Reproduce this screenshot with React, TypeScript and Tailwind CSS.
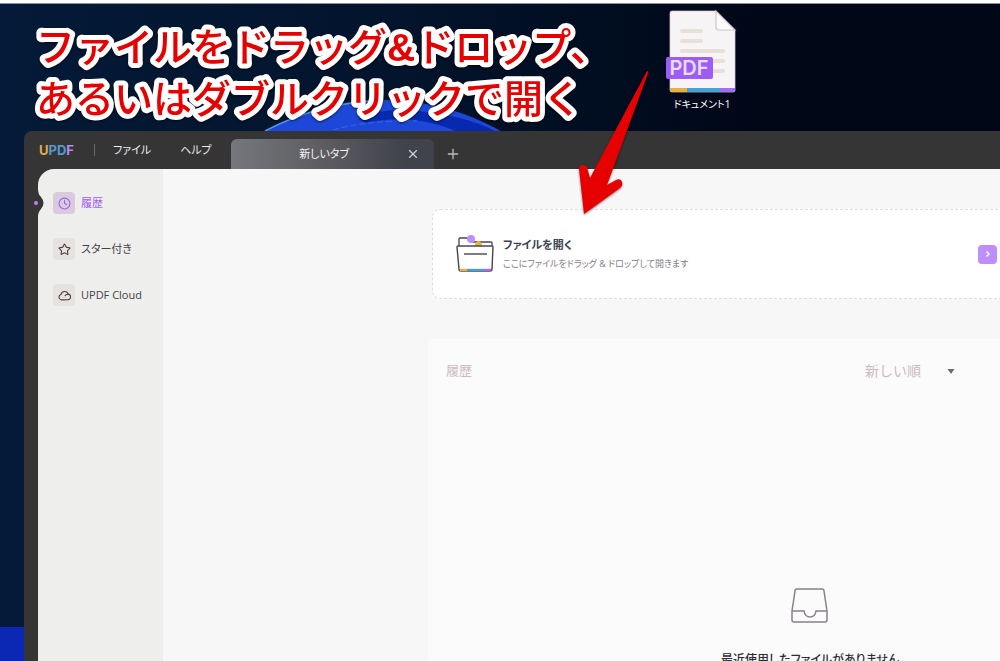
import { Clock, Plus, Star, X } from "lucide-react";
import { useState } from "react";

function CloudIcon({ className }: { className?: string }) {
  return (
    <svg
      className={className}
      viewBox="0 0 24 24"
      fill="none"
      stroke="currentColor"
      strokeWidth="2"
      strokeLinecap="round"
      strokeLinejoin="round"
      aria-hidden="true"
    >
      <path d="M6 20 A5 5 0 0 1 5.500 10.200 A7 7 0 0 1 19 9.500 A5.300 5.300 0 0 1 18 20 Z" />
      <path d="M19 9.500 Q15 9.500 13 12.500" />
    </svg>
  );
}

const NAV_ITEMS = [
  { id: "history", label: "履歴", icon: Clock },
  { id: "starred", label: "スター付き", icon: Star },
  { id: "cloud", label: "UPDF Cloud", icon: CloudIcon },
];

const MENUS = ["ファイル", "ヘルプ"];

const SORT_OPTIONS = ["新しい順", "古い順", "名前順"];

function Wallpaper() {
  return (
    <div className="absolute inset-0 overflow-hidden bg-linear-to-r from-[#041a38] via-[#03142c] via-40% to-[#000818] to-75%">
      <svg className="absolute left-[143px] top-[99px]" width="480" height="480" viewBox="0 0 480 480" aria-hidden="true">
        <circle cx="240" cy="240" r="239" fill="#1c47d8" />
        <path d="M122 32 Q175 4 240 1" fill="none" stroke="#4c9ae0" strokeWidth="1.5" />
        <path d="M215 20 Q235 10 262 11 Q322 15 356 34 L300 60 Z" fill="#0729b0" />
        <path d="M186 40 Q200 22 258 20 Q300 22 326 40 Z" fill="#1c47d8" />
        <path d="M190 31 Q225 21 274 22" fill="none" stroke="#3568e0" strokeDasharray="6 3" />
      </svg>
      <div className="absolute bottom-0 left-0 h-[34px] w-6 bg-[#0a28b4]" />
    </div>
  );
}

function DocumentIcon() {
  return (
    <svg width="72" height="86" viewBox="0 0 72 86" aria-hidden="true">
      <path d="M6 2 H50 L69 21 V81 Q69 83 67 83 H6 Q4 83 4 81 V4 Q4 2 6 2 Z" fill="#f6f4f4" stroke="#d9cfe0" strokeWidth="0.7" />
      <path d="M50 2 V18 Q50 21 53 21 H69 Z" fill="#fdfcfd" stroke="#cfc3d2" strokeWidth="1.2" />
      <g stroke="#e6dfda" strokeWidth="4" strokeLinecap="round">
        <path d="M16 22 H35 M16 32 H35 M16 42 H57 M30 52 H57 M30 62 H57" />
      </g>
      <path d="M4 79 H21 V83 H6 Q4 83 4 81 Z" fill="#ebb03a" />
      <path d="M21 79 H54 V83 H21 Z" fill="#47a0d8" />
      <path d="M54 79 H69 V81 Q69 83 67 83 H54 Z" fill="#a46cf5" />
      <rect x="0" y="48" width="47" height="22" rx="2" fill="#9e5cf6" />
      <text x="23" y="66" textAnchor="middle" className="font-['Inter'] text-[20px] font-semibold" fill="#e6ddf3">
        PDF
      </text>
    </svg>
  );
}

function FolderIcon() {
  return (
    <svg width="38" height="38" viewBox="0 0 38 38" fill="none" aria-hidden="true">
      <path d="M3 12 V4 Q3 3 4 3 H14 L17 7 H35 Q36 7 36 8 V12" fill="#fff" stroke="#4a444c" strokeWidth="1.3" />
      <circle cx="15" cy="4" r="4" fill="#bd8ffa" />
      <path d="M19 11 Q19 6 23 6 Q26 7 26 11 Z" fill="#ebb03a" />
      <path d="M2 11 H36 Q37 11 37 12 L36 34 Q36 36 34 36 H5 Q3 36 3 34 L1 12 Q1 11 2 11 Z" fill="#fff" stroke="#4a444c" strokeWidth="1.4" />
      <path d="M8 19 H31" stroke="#4a444c" strokeWidth="1.4" />
      <path d="M4 35 H11" stroke="#ebb03a" strokeWidth="2.4" />
      <path d="M11 35 H28" stroke="#47a0d8" strokeWidth="2.4" />
      <path d="M28 35 H35" stroke="#a46cf5" strokeWidth="2.4" />
    </svg>
  );
}

function TrayIcon() {
  return (
    <svg width="38" height="36" viewBox="0 0 38 36" fill="none" stroke="#8b808b" strokeWidth="1.5" aria-hidden="true">
      <path d="M6 1 H31 Q33 1 33 3 L36 23 V32 Q36 34 34 34 H3 Q1 34 1 32 V23 L4 3 Q4 1 6 1 Z" />
      <path d="M1 23 H13 Q14 29 19 29 Q24 29 25 23 H36" />
    </svg>
  );
}

// Big outlined caption on top of the desktop
function Caption() {
  return (
    <svg
      className="absolute left-7 top-0 z-20 overflow-visible drop-shadow-[0_1px_1px_rgba(0,0,0,0.6)]"
      width="580"
      height="127"
    >
      <g
        className="font-['Liberation_Sans','Noto_Sans_CJK_JP',sans-serif] text-[39px] font-medium [font-feature-settings:normal]"
        fill="#e60000"
        stroke="#ffffff"
        strokeWidth="10"
        strokeLinejoin="round"
        paintOrder="stroke"
      >
        <text x="8" y="57">
          ファイルをドラッグ<tspan className="font-bold">&amp;</tspan>ドロップ、
        </text>
        <text x="8" y="109">
          あるいはダブルクリックで開く
        </text>
      </g>
    </svg>
  );
}

function ArrowAnnotation() {
  return (
    <svg
      className="pointer-events-none absolute left-[574px] top-[68px] z-20 drop-shadow-[0_1px_1px_rgba(0,0,0,0.5)]"
      width="80"
      height="150"
      viewBox="0 0 80 150"
      aria-hidden="true"
    >
      <path
        d="M72.500 4 Q74 2 74.500 4 L33 117 L42 112 Q47 110 48 114 Q49 118 46 120 L10 146 L5 101 Q5 97 9 97 Q13 97 13.500 101 L16 110 Z"
        fill="#e60000"
      />
    </svg>
  );
}

function TitleBar() {
  return (
    <header className="flex h-[38px] shrink-0 items-end pl-[15px] text-[11px] leading-4">
      <div className="flex h-full items-center">
        <span className="w-[55px] font-['Inter'] text-[13px] font-bold">
          <span className="text-[#e0ab45]">U</span>
          <span className="text-[#4f9dce]">PD</span>
          <span className="text-[#b78af5]">F</span>
        </span>
        <span className="mr-[18px] h-3 w-px bg-[#6b6b6b]" />
        <nav className="flex gap-[29px]">
          {MENUS.map((menu) => (
            <button key={menu} className="text-[#ececec]">
              {menu}
            </button>
          ))}
        </nav>
      </div>
      <div className="ml-[19px] flex h-[30px] w-[203px] items-center rounded-t-md bg-linear-to-r from-[#76777c] via-[#5a5a5e] via-50% to-[#41434c] to-85%">
        <span className="flex-1 pl-3 text-center text-[#f2f2f2]">新しいタブ</span>
        <button aria-label="閉じる" className="mr-[14px] text-[#d0ced2]">
          <X className="h-3.5 w-3.5" strokeWidth={2} />
        </button>
      </div>
      <button aria-label="新しいタブを追加" className="flex h-[30px] w-[38px] items-center justify-center text-[#bdb8bf]">
        <Plus className="h-4 w-4" strokeWidth={2} />
      </button>
    </header>
  );
}

function Sidebar({ active, onSelect }: { active: string; onSelect: (id: string) => void }) {
  return (
    <nav className="relative w-[125px] shrink-0 rounded-tl-2xl bg-[#eeeeec] pl-[15px] pt-[23px]">
      {/* Active marker cut into the window frame */}
      <svg className="absolute -left-1 top-5" width="10" height="28" viewBox="0 0 10 28" aria-hidden="true">
        <path d="M0 0 H4 Q4 5 7 8 Q9.500 11 9.500 14 Q9.500 17 7 20 Q4 23 4 28 H0 Z" fill="#353535" />
        <circle cx="2" cy="14" r="2" fill="#b985fa" />
      </svg>
      <ul className="flex flex-col gap-6">
        {NAV_ITEMS.map(({ id, label, icon: Icon }) => {
          const isActive = id === active;
          return (
            <li key={id}>
              <button
                onClick={() => onSelect(id)}
                className={`flex items-center gap-[6px] text-[11px] leading-4 ${isActive ? "text-[#a45cf5]" : "text-[#454048]"}`}
              >
                <span
                  className={`flex h-[22px] w-[22px] items-center justify-center rounded ${isActive ? "bg-[#d9cbdd]" : "bg-[#e8e2de]"}`}
                >
                  <Icon className="h-[13px] w-[13px]" />
                </span>
                {label}
              </button>
            </li>
          );
        })}
      </ul>
    </nav>
  );
}

function OpenFileCard() {
  return (
    <section className="ml-1 flex h-[90px] items-center rounded-lg border border-dashed border-[#dedede] bg-white pl-[23px] pr-[194px]">
      <FolderIcon />
      <div className="ml-[9px] flex-1">
        <h1 className="text-[11px] font-bold leading-5 text-[#3b4252]">ファイルを開く</h1>
        <p className="text-[9px] leading-[18px] text-[#857b85]">ここにファイルをドラッグ &amp; ドロップして開きます</p>
      </div>
      <button
        aria-label="ファイルを開く"
        className="flex h-[19px] w-[19px] items-center justify-center rounded bg-[#bd8ffa] text-white"
      >
        <svg width="6" height="8" viewBox="0 0 6 8" fill="none" stroke="currentColor" strokeWidth="1.4" aria-hidden="true">
          <path d="M1.500 1.500 L4 4 L1.500 6.500" />
        </svg>
      </button>
    </section>
  );
}

function HistoryPanel() {
  const [sort, setSort] = useState(SORT_OPTIONS[0]);

  return (
    <section className="mt-10 flex-1 bg-[#fbfbfb]">
      <div className="flex h-16 items-center justify-between pl-[18px] pr-[235px] text-[#cdb9c3]">
        <h2 className="text-[13px]">履歴</h2>
        <label className="relative flex items-center text-sm">
          <span className="sr-only">並べ替え</span>
          <select
            value={sort}
            onChange={(e) => setSort(e.target.value)}
            className="h-7 w-[92px] appearance-none bg-transparent outline-none [font-feature-settings:normal]"
          >
            {SORT_OPTIONS.map((option) => (
              <option key={option}>{option}</option>
            ))}
          </select>
          <svg className="pointer-events-none absolute right-[2px]" width="8" height="5" viewBox="0 0 8 5" aria-hidden="true">
            <path d="M0.500 0 H7.500 L4 5 Z" fill="#6f6a70" />
          </svg>
        </label>
      </div>
      <div className="flex flex-col items-center pt-[185px]">
        <TrayIcon />
        <p className="mt-[26px] text-[12px] font-medium leading-5 text-[#2e2b33]">最近使用したファイルがありません</p>
      </div>
    </section>
  );
}

export default function App() {
  const [active, setActive] = useState("history");

  return (
    <div className="relative flex h-screen flex-col overflow-hidden font-['Open_Sans','Noto_Sans_CJK_JP',sans-serif] [font-feature-settings:'palt']">
      <div className="z-10 h-1 shrink-0 border-b border-[#8a909c] bg-white" />
      <Wallpaper />

      {/* Desktop */}
      <div className="relative h-[127px] shrink-0">
        <Caption />
        <button className="absolute left-[666px] top-[5px] flex w-[72px] flex-col items-center text-[10px] leading-4 text-white">
          <DocumentIcon />
          <span className="mt-px">ドキュメント1</span>
        </button>
      </div>

      {/* App window, runs past the right edge of the screen */}
      <div className="relative ml-6 flex flex-1 flex-col rounded-tl-lg bg-[#353535]">
        <TitleBar />
        <div className="ml-[14px] flex flex-1">
          <Sidebar active={active} onSelect={setActive} />
          <main className="flex min-w-0 flex-1 flex-col bg-[#f7f7f7] pl-[265px] pt-10">
            <div className="-mr-48 flex flex-1 flex-col">
              <OpenFileCard />
              <HistoryPanel />
            </div>
          </main>
        </div>
      </div>

      <ArrowAnnotation />
    </div>
  );
}
